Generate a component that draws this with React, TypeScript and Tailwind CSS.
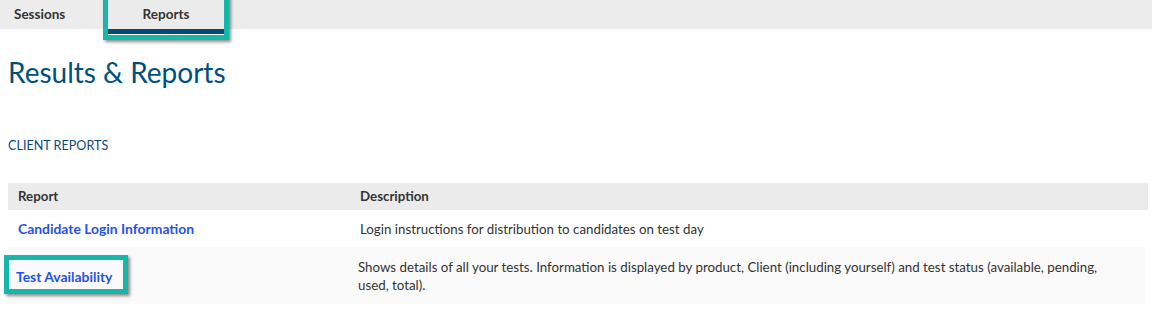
export default function App() {
  const rows = [
    {
      name: "Candidate Login Information",
      desc: "Login instructions for distribution to candidates on test day",
    },
    {
      name: "Test Availability",
      desc: "Shows details of all your tests. Information is displayed by product, Client (including yourself) and test status (available, pending, used, total).",
      highlight: true,
    },
  ];

  return (
    <div className="w-[1152px] h-[309px] bg-white overflow-hidden font-['Lato','Liberation_Sans',sans-serif] text-[#333]">
      {/* Tabs */}
      <div className="h-[29px] bg-[#ececec] flex items-start">
        <div className="pl-[14px] pt-[4px] w-[108px] text-[13.5px] font-bold text-[#333]">Sessions</div>
        <div className="relative w-[116px] h-[34px] bg-[#ebebeb] border-b-[5px] border-[#004b78] flex justify-center pt-[4px] text-[13.5px] font-bold text-[#333]">
          Reports
          <div className="absolute -left-[5px] -right-[5px] -top-[8px] -bottom-[11px] border-[5px] border-[#17b6ab] shadow-[2px_2px_3px_rgba(0,0,0,0.45)]" />
        </div>
      </div>

      <div className="px-[8px]">
        <h1 className="mt-[26px] text-[28px] leading-[34px] text-[#00507f]">Results &amp; Reports</h1>

        <div className="mt-[48px] text-[12.6px] text-[#0a4a78]">CLIENT REPORTS</div>

        <div className="mt-[27px] w-[1140px] text-[13.3px]">
          <div className="grid grid-cols-[342px_1fr] h-[27px] items-center bg-[#ebebeb] font-bold text-[#333]">
            <div className="px-[10px] pt-[1px]">Report</div>
            <div className="px-[10px] pt-[1px]">Description</div>
          </div>
          {rows.map((row, i) =>
            row.highlight ? (
              <div key={i} className="grid grid-cols-[340px_1fr] h-[57px] w-[1138px] items-center bg-[#fafafa]">
                <div className="relative pl-[8px] pt-[5px]">
                  <a href="#" className="font-bold text-[13.9px] text-[#1f52f0]">{row.name}</a>
                  <div className="absolute -left-[4px] -top-[7px] w-[124px] h-[39px] border-[5px] border-[#17b6ab] shadow-[2px_2px_3px_rgba(0,0,0,0.45)]" />
                </div>
                <div className="pl-[10px] pr-[30px] pt-[1px] leading-[18px] text-[#333]">{row.desc}</div>
              </div>
            ) : (
              <div key={i} className="grid grid-cols-[342px_1fr] h-[37px] items-center bg-white">
                <div className="px-[10px] pt-[3px]">
                  <a href="#" className="font-bold text-[13.9px] text-[#1f52f0]">{row.name}</a>
                </div>
                <div className="px-[10px] pt-[3px] text-[#333]">{row.desc}</div>
              </div>
            )
          )}
        </div>
      </div>
    </div>
  );
}
